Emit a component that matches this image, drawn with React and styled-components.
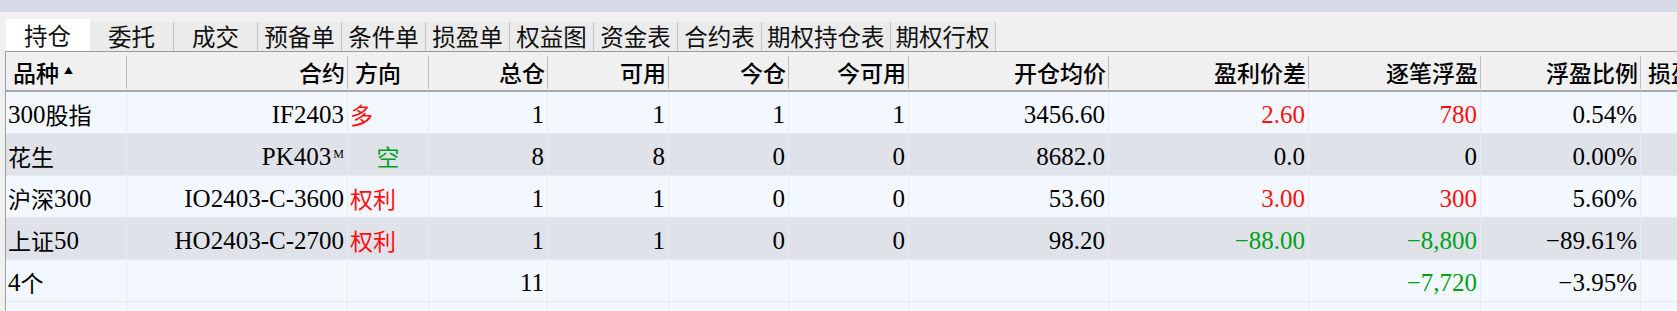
import styled, { createGlobalStyle } from "styled-components";

const GlobalStyle = createGlobalStyle`
  html, body {
    margin: 0;
    padding: 0;
    background: #f0f0f0;
    overflow: hidden;
  }
  body {
    font-family: "Noto Sans CJK SC", sans-serif;
  }
`;

// 各列宽度（含右侧分隔线）
const COLS = "121px 221px 81px 119px 121px 120px 120px 200px 200px 172px 160px 220px";

const Page = styled.div`
  width: 1677px;
  height: 311px;
  overflow: hidden;
  background: #f0f0f0;
`;

const TopBand = styled.div`
  height: 12px;
  background: #d6d9e6;
`;

const TabBar = styled.div`
  display: flex;
  align-items: flex-end;
  height: 32px;
  margin-top: 7px;
  padding-left: 6px;
`;

const Tab = styled.div`
  box-sizing: border-box;
  min-width: 84px;
  height: ${(p) => (p.$active ? "32px" : "29px")};
  padding: ${(p) => (p.$active ? "2px" : "0")} 5px 0;
  display: flex;
  align-items: center;
  justify-content: center;
  background: ${(p) => (p.$active ? "#ffffff" : "#ebebeb")};
  border-right: 1px solid ${(p) => (p.$active ? "#ffffff" : "#c4c4c4")};
  font-family: "Noto Sans CJK SC", sans-serif;
  font-size: 23.5px;
  line-height: 1;
  color: #111;
  white-space: nowrap;
`;

const Table = styled.div`
  margin-left: 5px;
  border-left: 1px solid #9c9c9c;
  border-top: 1px solid #9c9c9c;
  background: #f2f8fe;
`;

const HeaderRow = styled.div`
  display: grid;
  grid-template-columns: ${COLS};
  height: 40px;
  background: #f0f0f0;
  border-bottom: 2px solid #a8a8a8;
  box-sizing: border-box;
`;

const HeadCell = styled.div`
  position: relative;
  display: flex;
  align-items: center;
  justify-content: ${(p) => (p.$left ? "flex-start" : "flex-end")};
  padding: 2px 3px 0 ${(p) => (p.$left ? "7px" : "3px")};
  font-family: "Noto Sans CJK SC", sans-serif;
  font-size: 23px;
  font-weight: 500;
  color: #000;
  white-space: nowrap;
  overflow: hidden;
  &::after {
    content: "";
    position: absolute;
    right: 0;
    top: 4px;
    bottom: 1px;
    width: 1px;
    background: #bdbdbd;
  }
`;

const SortMark = styled.span`
  font-size: 9px;
  margin-left: 5px;
  margin-bottom: 3px;
`;

const Row = styled.div`
  display: grid;
  grid-template-columns: ${COLS};
  height: ${(p) => (p.$filler ? "20px" : "42px")};
  box-sizing: border-box;
  background: ${(p) => (p.$alt ? "#dfe3e9" : "#f2f8fe")};
  border-bottom: 1px solid ${(p) => (p.$alt ? "#e6ebf1" : "#e4e9ef")};
`;

const Cell = styled.div`
  display: flex;
  align-items: center;
  justify-content: ${(p) =>
    p.$align === "left" ? "flex-start" : p.$align === "center" ? "center" : "flex-end"};
  padding: 4px 3px 0 ${(p) => (p.$align === "left" ? "2px" : "3px")};
  border-right: 1px solid #e7ebf0;
  font-family: "Liberation Serif", "Noto Sans CJK SC", serif;
  font-size: 25px;
  color: ${(p) => p.$color || "#000"};
  white-space: nowrap;
  overflow: hidden;
`;

// 汉字部分稍小一点，和宋体的比例接近
const Han = styled.span`
  font-family: "Noto Sans CJK SC", sans-serif;
  font-size: 23px;
  position: relative;
  top: -1px;
`;

const Sup = styled.sup`
  font-size: 12px;
  margin-left: 2px;
  align-self: flex-start;
  margin-top: 9px;
`;

const RED = "#ff1010";
const GREEN = "#00a11a";

const Text = ({ children }) =>
  String(children)
    .split(/([\u4e00-\u9fff]+)/)
    .filter(Boolean)
    .map((part, i) => (/[\u4e00-\u9fff]/.test(part) ? <Han key={i}>{part}</Han> : part));

const tabs = ["持仓", "委托", "成交", "预备单", "条件单", "损盈单", "权益图", "资金表", "合约表", "期权持仓表", "期权行权"];

const headers = [
  { label: "品种", left: true, sort: true },
  { label: "合约" },
  { label: "方向", left: true },
  { label: "总仓" },
  { label: "可用" },
  { label: "今仓" },
  { label: "今可用" },
  { label: "开仓均价" },
  { label: "盈利价差" },
  { label: "逐笔浮盈" },
  { label: "浮盈比例" },
  { label: "损盈", left: true },
];

const rows = [
  {
    name: "300股指", code: "IF2403", dir: "多", dirColor: RED, dirAlign: "left",
    total: "1", avail: "1", today: "1", todayAvail: "1", price: "3456.60",
    diff: "2.60", diffColor: RED, pnl: "780", pnlColor: RED, ratio: "0.54%",
  },
  {
    name: "花生", code: "PK403", sup: "M", dir: "空", dirColor: GREEN, dirAlign: "center",
    total: "8", avail: "8", today: "0", todayAvail: "0", price: "8682.0",
    diff: "0.0", pnl: "0", ratio: "0.00%",
  },
  {
    name: "沪深300", code: "IO2403-C-3600", dir: "权利", dirColor: RED, dirAlign: "left",
    total: "1", avail: "1", today: "0", todayAvail: "0", price: "53.60",
    diff: "3.00", diffColor: RED, pnl: "300", pnlColor: RED, ratio: "5.60%",
  },
  {
    name: "上证50", code: "HO2403-C-2700", dir: "权利", dirColor: RED, dirAlign: "left",
    total: "1", avail: "1", today: "0", todayAvail: "0", price: "98.20",
    diff: "−88.00", diffColor: GREEN, pnl: "−8,800", pnlColor: GREEN, ratio: "−89.61%",
  },
];

const DataRow = ({ r, alt }) => (
  <Row $alt={alt}>
    <Cell $align="left"><Text>{r.name}</Text></Cell>
    <Cell>
      {r.code}
      {r.sup && <Sup>{r.sup}</Sup>}
    </Cell>
    <Cell $align={r.dirAlign} $color={r.dirColor}><Text>{r.dir}</Text></Cell>
    <Cell>{r.total}</Cell>
    <Cell>{r.avail}</Cell>
    <Cell>{r.today}</Cell>
    <Cell>{r.todayAvail}</Cell>
    <Cell>{r.price}</Cell>
    <Cell $color={r.diffColor}>{r.diff}</Cell>
    <Cell $color={r.pnlColor}>{r.pnl}</Cell>
    <Cell>{r.ratio}</Cell>
    <Cell />
  </Row>
);

const EmptyCells = ({ n }) => Array.from({ length: n }, (_, i) => <Cell key={i} />);

export default function App() {
  return (
    <Page>
      <GlobalStyle />
      <TopBand />
      <TabBar>
        {tabs.map((t, i) => (
          <Tab key={t} $active={i === 0}>{t}</Tab>
        ))}
      </TabBar>
      <Table>
        <HeaderRow>
          {headers.map((h) => (
            <HeadCell key={h.label} $left={h.left}>
              {h.label}
              {h.sort && <SortMark>▲</SortMark>}
            </HeadCell>
          ))}
        </HeaderRow>
        {rows.map((r, i) => (
          <DataRow key={r.code} r={r} alt={i % 2 === 1} />
        ))}
        <Row>
          <Cell $align="left"><Text>4个</Text></Cell>
          <EmptyCells n={2} />
          <Cell>11</Cell>
          <EmptyCells n={5} />
          <Cell $color={GREEN}>−7,720</Cell>
          <Cell>−3.95%</Cell>
          <Cell />
        </Row>
        <Row $filler>
          <EmptyCells n={12} />
        </Row>
      </Table>
    </Page>
  );
}
